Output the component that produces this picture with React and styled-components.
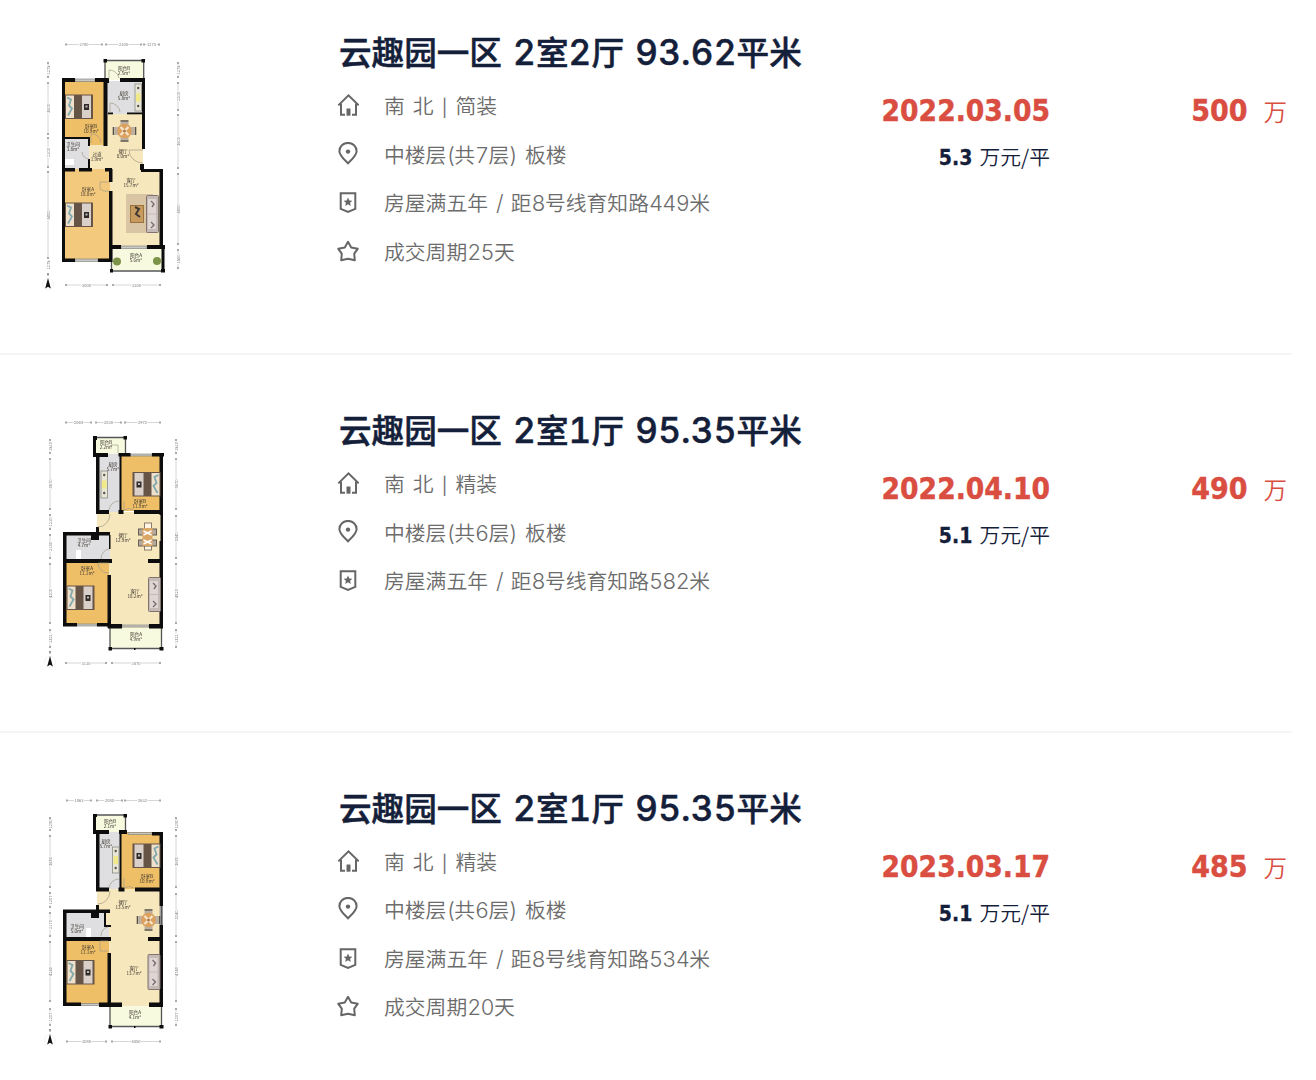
import React from 'react';
import styled, {createGlobalStyle} from "styled-components";

const GlobalStyle = createGlobalStyle`
    body {
        margin: 0;
        background-color: #fff;
    }
`;

const PageWrap = styled.div`
    width: 1292px;
    height: 1080px;
    overflow: hidden;
`;

// the list is scrolled a little, the first row starts above the page
const List = styled.div`
    margin-top: -23px;
`;

const Row = styled.div`
    height: 377.75px;
    box-sizing: border-box;
    padding: 53px 5px 0 30px;
    display: flex;
    align-items: flex-start;
    border-bottom: 2px solid #f5f5f5;
`;

const PlanImg = styled.svg`
    display: block;
    flex: none;
    width: 170px;
    height: 270px;
    margin-right: 137px;
    filter: blur(0.5px);
`;

const Info = styled.div`
    width: 500px;
    flex: none;
`;

const Title = styled.div`
    height: 48px;
    line-height: 42px;
    margin-left: 2px;
    margin-bottom: 3px;
    font-family: "Noto Sans CJK SC", sans-serif;
    font-size: 32.6px;
    font-weight: 500;
    -webkit-text-stroke: 0.5px #14203a;
    color: #14203a;
    word-spacing: 3.8px;
    white-space: pre;
`;

const TitleNum = styled.span`
    font-family: "Inter", sans-serif;
    font-weight: 500;
    font-size: 35px;
    line-height: 1;
    letter-spacing: 0.25px;
    font-variant-numeric: tabular-nums;
`;

const InfoLine = styled.div`
    height: 48.5px;
    display: flex;
    align-items: center;
`;

const IconBox = styled.svg`
    display: block;
    width: 22px;
    height: 24px;
    margin-right: 25px;
    flex: none;
    fill: none;
    stroke: #666;
    stroke-width: 2;
`;

const InfoText = styled.span`
    font-family: "Noto Sans CJK SC", sans-serif;
    font-size: 20.8px;
    font-weight: 350;
    line-height: 30px;
    color: #6c6c6c;
    white-space: pre;
`;

const Latin = styled.span`
    font-family: "Inter", sans-serif;
    font-size: ${props=>props.$bar ? 17 : 21.8}px;
    font-weight: ${props=>props.$bar ? 400 : 300};
    line-height: 1;
    letter-spacing: ${props=>props.$bar ? 0 : -0.7}px;
    font-variant-numeric: tabular-nums;
    word-spacing: ${props=>props.$bar ? 3.6 : 2.8}px;
`;

const DateBox = styled.div`
    width: 213px;
    margin-top: 58px;
    flex: none;
    text-align: right;
`;

const DealDate = styled.div`
    height: 44px;
    line-height: 46px;
    font-family: "DejaVu Sans Condensed", "DejaVu Sans", sans-serif;
    font-stretch: condensed;
    font-size: 29.6px;
    font-weight: 700;
    color: #d94e41;
    -webkit-text-stroke: 0.4px #d94e41;
`;

const UnitPrice = styled.div`
    height: 48px;
    line-height: 48px;
    font-family: "Noto Sans CJK SC", sans-serif;
    font-size: 20.8px;
    font-weight: 350;
    color: #14203a;
    white-space: pre;
`;

const UnitNum = styled.span`
    margin-right: 2.5px;
    font-family: "DejaVu Sans Condensed", "DejaVu Sans", sans-serif;
    font-stretch: condensed;
    font-size: 21px;
    font-weight: 700;
    -webkit-text-stroke: 0.3px #14203a;
`;

const PriceBox = styled.div`
    flex: 1;
    margin-top: 58px;
    display: flex;
    justify-content: flex-end;
    align-items: baseline;
    line-height: 46px;
    color: #d94e41;
`;

const PriceNum = styled.span`
    font-family: "DejaVu Sans Condensed", "DejaVu Sans", sans-serif;
    font-stretch: condensed;
    font-size: 30px;
    font-weight: 700;
    -webkit-text-stroke: 0.4px #d94e41;
`;

const PriceUnit = styled.span`
    margin-left: 16px;
    font-family: "Noto Sans CJK SC", sans-serif;
    font-size: 23.5px;
    font-weight: 350;
`;

const HomeIcon = () => (
    <IconBox viewBox="0 0 22 24">
        <path d="M1.3 12.4 L11.5 2.4 L21.7 12.4" />
        <path d="M4 10.5 V21.7 H8 M15 21.7 H19 V10.5" />
        <path d="M11.5 15.5 V22.7" strokeWidth="4" />
    </IconBox>
);

const PinIcon = () => (
    <IconBox viewBox="0 0 22 24">
        <path d="M11 21.3 C7 17.2 2.4 13.5 2.4 9.2 A8.6 8.3 0 0 1 19.6 9.2 C19.6 13.5 15 17.2 11 21.3 Z" />
        <circle cx="11" cy="9.6" r="2.2" fill="#666" stroke="none" />
    </IconBox>
);

const BadgeIcon = () => (
    <IconBox viewBox="0 0 22 24">
        <path d="M3.7 3.3 H18.3 V18.8 L11 22 L3.7 18.8 Z" />
        <path fill="#666" stroke="none" d="M11 7.5 L12.3 10.4 L15.4 10.7 L13.1 12.8 L13.7 15.9 L11 14.3 L8.3 15.9 L8.9 12.8 L6.6 10.7 L9.7 10.4 Z" />
    </IconBox>
);

const StarIcon = () => (
    <IconBox viewBox="0 0 22 24">
        <path strokeLinejoin="round" d="M11 2.8 L14.2 8.4 L20.7 9.8 L17.2 14.7 L17.8 21.3 L11 19.7 L4.2 21.3 L4.8 14.7 L1.3 9.8 L7.8 8.4 Z" />
    </IconBox>
);

const icons = [HomeIcon, PinIcon, BadgeIcon, StarIcon];

const floorColors = {
    wood: '#efbf68',
    light: '#f3c97e',
    tile: '#dfdfe1',
    hall: '#f7e7bd',
    balcony: '#f8fae0',
};

const Bed = ({x, y, flip}) => (
    <g transform={flip ? `translate(${x + 28} ${y}) scale(-1 1)` : `translate(${x} ${y})`}>
        <rect width="28" height="24.5" fill="#665447" />
        <rect x="1" y="1" width="8" height="22.5" fill="#eee0ca" />
        <path d="M2 3 L6 5 L4 11 L7 14 L3 21" stroke="#82a9ad" strokeWidth="1.8" fill="none" />
        <rect x="17" y="1" width="9" height="22.5" fill="#d9d0c9" />
        <rect x="19" y="9.5" width="5" height="6" fill="#302b28" />
        <rect x="20.5" y="11" width="2" height="2" fill="#bbb" />
    </g>
);

const Dining = ({x, y, tall}) => (
    <g transform={`translate(${x} ${y})`}>
        {tall ? (
            <>
                <rect x="-3" y="-14" width="7" height="27" fill="#fff5e0" stroke="#8a7a6c" strokeWidth="1" />
                <rect x="-9" y="-8" width="18" height="6" fill="#b5a99e" stroke="#665d55" strokeWidth="1" />
                <rect x="-9" y="3" width="18" height="6" fill="#b5a99e" stroke="#665d55" strokeWidth="1" />
                <rect x="-5" y="-9" width="10" height="18" fill="#dba768" />
                <path d="M-4 -6 L4 -2 M4 -6 L-4 -2 M-4 3 L4 7 M4 3 L-4 7" stroke="#fff" strokeWidth="1.4" />
            </>
        ) : (
            <>
                <path d="M-4 -10 H4 M-4 10 H4 M-11 -4 V4 M11 -4 V4" stroke="#56504b" strokeWidth="1.6" />
                <rect x="-4" y="-9" width="8" height="18" fill="#bbb0a3" />
                <rect x="-10" y="-4" width="20" height="8" fill="#bbb0a3" />
                <circle r="7.3" fill="#dda15e" />
                <path d="M-4 -4 L4 4 M4 -4 L-4 4" stroke="#f7e7cf" strokeWidth="2.2" />
                <circle r="1.5" fill="#a77a4d" />
            </>
        )}
    </g>
);

const Sofa = ({x, y, h}) => (
    <g transform={`translate(${x} ${y})`}>
        <rect x="0.5" y="0.5" width="12" height={h} rx="1" fill="#c6bab7" stroke="#81736f" strokeWidth="1" />
        <rect x="2" y="4" width="8" height={h / 2 - 4} fill="#dfd6d3" />
        <rect x="2" y={h / 2 + 1} width="8" height={h / 2 - 4} fill="#dfd6d3" />
        <path d={`M5 6 L8 9 L6 12 M5 ${h - 10} L8 ${h - 7} L5 ${h - 4}`} stroke="#7b6e70" strokeWidth="1.4" fill="none" />
    </g>
);

const Stove = ({x, y, h}) => (
    <g>
        <rect x={x} y={y} width="6.5" height={h} fill="#e9e6d6" stroke="#8a8a86" strokeWidth="0.8" />
        <rect x={x + 1} y={y + h * 0.35} width="4.5" height={h * 0.3} fill="#f1e987" />
        <circle cx={x + 3.2} cy={y + 4} r="1.2" fill="#555" />
        <circle cx={x + 3.2} cy={y + h - 5} r="1.2" fill="#555" />
    </g>
);

const Compass = ({x, y}) => (
    <g>
        <circle cx={x} cy={y} r="5.5" fill="none" stroke="#eee" strokeWidth="0.7" />
        <path d={`M${x} ${y - 6} L${x + 2.8} ${y + 4.5} L${x} ${y + 2.8} L${x - 2.8} ${y + 4.5} Z`} fill="#111" />
        <rect x={x - 1} y={y - 11} width="2" height="2.5" fill="#999" />
    </g>
);

// [start, end, label]
const DimsX = ({y, items}) => items.map(([a, b, label]) => (
    <g key={a}>
        <path d={`M${a} ${y} H${b}`} stroke="#ccc" strokeWidth="0.8" />
        <path d={`M${a} ${y - 1} h2 v2 h-2 Z M${b - 2} ${y - 1} h2 v2 h-2 Z`} fill="#aaa" />
        <rect x={(a + b) / 2 - 5} y={y - 2} width="10" height="4" fill="#fff" />
        <text x={(a + b) / 2} y={y + 1.5} fontSize="4" textAnchor="middle" fill="#777">{label}</text>
    </g>
));

const DimsY = ({x, items}) => items.map(([a, b, label]) => (
    <g key={a} transform={`translate(${x} ${(a + b) / 2}) rotate(-90)`}>
        <path d={`M${(a - b) / 2} 0 H${(b - a) / 2}`} stroke="#ccc" strokeWidth="0.8" />
        <path d={`M${(a - b) / 2} -1 h2 v2 h-2 Z M${(b - a) / 2 - 2} -1 h2 v2 h-2 Z`} fill="#aaa" />
        <rect x="-5" y="-2" width="10" height="4" fill="#fff" />
        <text y="1.5" fontSize="4" textAnchor="middle" fill="#777">{label}</text>
    </g>
));

const plans = {
    a: {
        floors: [
            ['balcony', 75, 30, 39, 20], ['tile', 77, 51, 36, 33], ['hall', 76, 84, 37, 57],
            ['hall', 58, 108, 20, 31], ['hall', 79, 139, 52, 78], ['wood', 34, 50, 41, 58],
            ['wood', 58, 106, 17, 9], ['tile', 34, 108, 25, 31], ['light', 34, 139, 46, 92], ['balcony', 82, 218, 50, 22],
        ],
        walls: [
            [32, 48, 13, 4], [65, 48, 12, 4], [32, 48, 3, 93], [34, 107, 26, 2], [73.5, 48, 4, 68],
            [58, 108, 2, 8], [58, 129, 2, 10], [76, 48, 3, 5], [90, 48, 25, 4], [112, 48, 3, 71],
            [110, 134, 4, 6], [78, 82.5, 5, 1.8], [97, 82.5, 16, 1.8], [111, 139, 22, 3], [129.5, 139, 3.5, 79],
            [32, 138, 13, 3.5], [49, 138, 13, 3.5], [75, 138, 7, 3.5], [32, 139, 3, 92], [32, 228.5, 13, 3.5],
            [68, 228.5, 14, 3.5], [79, 161, 3.5, 71], [79, 139, 3.5, 13], [81, 215, 10, 4], [117, 215, 18, 4],
            [131.5, 218, 3, 24], [80, 239, 3, 3.5], [131, 239, 4, 3.5], [73.5, 29, 3.5, 3.5], [111.5, 29, 3.5, 3.5],
        ],
        lines: 'M75 30.5 H114 M75 31 V50 M113.7 31 V50 M81.5 219 V241 M81 241 H133',
        windows: [[45, 49, 20, 2.5], [45, 229, 23, 2.5], [91, 216, 26, 2.5]],
        doors: 'M79 40 V49 M79 40 A10 10 0 0 1 89 48 M80 83 V73 A10 10 0 0 1 90 82 M52 122 A7 8 0 0 0 59 129 M61 113 V104 A9 9 0 0 1 71 113 M113 120 H99 A14 13 0 0 0 113 133 M79 152 H70 V159 A10 10 0 0 0 79 161',
        labels: [
            [94, 40, '阳台B', '2.5m²'], [94, 65, '厨房', '5.8m²'], [61, 98, '卧室B', '10.9m²'], [43, 116, '卫生间', '3.8m²'],
            [67, 126, '过道', '1.9m²'], [93, 123, '餐厅', '8.0m²'], [101, 152, '客厅', '15.7m²'],
            [58, 161, '卧室A', '18.0m²'], [106, 227, '阳台A', '5.6m²'],
        ],
        extra: (
            <g>
                <Bed x={35} y={64.5} />
                <Bed x={35} y={172.5} />
                <Stove x={105} y={54} h={27} />
                <Dining x={94.5} y={101} />
                <rect x="96" y="164" width="27" height="39" fill="#d9c5a3" />
                <rect x="100.5" y="175.5" width="13" height="17" fill="#c79a5d" stroke="#9a723f" />
                <path d="M105 177 L109 179 L106 184 L110 187" stroke="#403936" strokeWidth="2" fill="none" />
                <Sofa x={116} y={165} h={37} />
                <path d="M35 129 h9 v6 h-9 Z" fill="#fff" />
                <circle cx="87" cy="231.5" r="4" fill="#7d9347" />
                <circle cx="127" cy="231" r="4" fill="#7d9347" />
            </g>
        ),
        top: [[35, 73, '2700'], [75, 112, '2300'], [113, 130, '1275']],
        left: [[32, 48, '1275'], [52, 105, '3600'], [107, 138, '2100'], [141, 229, '5800'], [231, 239, '1275']],
        right: [[32, 48, '1275'], [52, 81, '2200'], [84, 139, '3600'], [143, 215, '4800'], [219, 239, '1500']],
        bottom: [[35, 78, '3000'], [82, 131, '3300']],
        dims: [14.5, 18, 148, 255],
        compass: [18, 254],
    },
    b: {
        floors: [
            ['balcony', 64, 29, 32, 17], ['tile', 69, 46, 22, 58], ['wood', 91, 46, 39, 57], ['hall', 67, 104, 64, 48],
            ['tile', 35, 126, 46, 27], ['hall', 78, 124, 53, 96], ['tile', 76, 126, 4, 26], ['wood', 35, 153, 44, 64], ['balcony', 80, 220, 52, 21],
        ],
        walls: [
            [63, 28, 3, 20], [63, 45, 15, 4], [63, 28, 4, 4], [93.5, 28, 3.5, 3.5], [66, 47, 3.5, 58], [66, 102, 13, 4],
            [89.5, 45, 2, 60], [88.5, 45, 12, 3.5], [122, 45, 12, 3.5], [129.5, 45, 3.5, 62], [129.5, 133, 3.5, 87],
            [130.5, 106, 2.5, 30], [88.5, 102, 5, 4], [104, 102, 29, 4], [66, 119, 3, 6], [33, 124, 47, 3.5], [61, 125, 8, 7],
            [33, 124, 3.5, 94], [79, 127, 1.5, 14], [33, 151, 49, 4], [118, 151, 14, 4], [77.5, 167, 3.5, 53],
            [33, 215, 14, 3.5], [67, 215, 12, 3.5], [78, 216, 14, 4.5], [119, 216, 14, 4.5],
            [78.5, 239, 3.5, 3.5], [129.5, 239, 4, 3.5], [104, 240, 1.5, 2],
        ],
        lines: 'M64 29.5 H96 M95.5 30 V46 M80 220 V240 M131.5 220 V240 M80 240.5 H132',
        windows: [[100, 46, 22, 2], [47, 216, 20, 2], [92, 217, 27, 2]],
        doors: 'M81 41 V37 H88 V45 M79 102 A10 10 0 0 1 89 93 M94 93 V102 A10 10 0 0 1 104 102 M80 106 A12 13 0 0 1 68 119 M71 151 A9 10 0 0 1 79 141 M79 155 H68 A10 10 0 0 0 79 165',
        labels: [
            [76, 36, '阳台B', '2.2m²'], [83, 58, '厨房', '5.7m²'], [110, 95, '卧室B', '11.9m²'], [93, 129, '餐厅', '12.9m²'],
            [54, 134, '卫生间', '4.7m²'], [57, 162, '卧室A', '11.1m²'], [105, 185, '客厅', '18.2m²'], [106, 228, '阳台A', '4.9m²'],
        ],
        extra: (
            <g>
                <Bed x={102.5} y={64} flip />
                <Bed x={36.5} y={177.5} />
                <Stove x={71} y={63} h={27} />
                <Dining x={117.5} y={129} tall />
                <Sofa x={118} y={169} h={34} />
                <path d="M46 151 v-9 h5 v9 Z" fill="#fff" />
            </g>
        ),
        top: [[35, 62, '2064'], [65, 92, '2030'], [94, 131, '2972']],
        left: [[31, 46, '1510'], [50, 102, '3670'], [106, 122, '1210'], [126, 151, '2130'], [155, 216, '4200'], [221, 240, '1321']],
        right: [[31, 46, '1510'], [50, 102, '3670'], [107, 151, '3340'], [155, 216, '4820'], [221, 240, '1321']],
        bottom: [[35, 77, '3110'], [81, 131, '3470']],
        dims: [14.5, 20, 146, 255],
        compass: [20, 254],
    },
    c: {
        floors: [
            ['balcony', 64, 29, 32, 17], ['tile', 69, 46, 22, 57], ['wood', 91, 46, 39, 57], ['hall', 67, 103, 64, 50],
            ['tile', 35, 126, 41, 27], ['hall', 78, 124, 53, 96], ['tile', 74, 139, 5, 14], ['wood', 35, 153, 44, 65], ['balcony', 80, 220, 52, 20],
        ],
        walls: [
            [63, 28, 3, 18], [63, 44, 16, 4], [63, 28, 4, 3], [93.5, 28, 3.5, 3.5], [66, 46, 3.5, 59], [66, 101.5, 13, 4],
            [89.5, 45, 2, 58], [89, 44, 8, 4], [122, 46, 11, 3.5], [129.5, 46, 3.5, 74], [129.5, 139, 3.5, 81],
            [88.5, 101.5, 6, 4], [105, 101.5, 28, 4], [66, 119, 3, 6], [33, 123.5, 47, 3.5], [61, 125, 8, 7],
            [33, 124, 3.5, 95], [74, 127, 2, 14], [74, 139, 7, 2], [33, 151, 48, 4], [118, 151, 14, 4], [77.5, 167, 3.5, 52],
            [33, 216.5, 18, 3.5], [69, 216.5, 23, 4.5], [119, 216.5, 14, 4.5],
            [78.5, 239, 3.5, 3.5], [129.5, 239, 4, 3.5], [104, 240, 1.5, 2],
        ],
        lines: 'M64 29 H96 M95.5 30 V46 M80 220 V240 M131.5 220 V240 M80 240.5 H132 M131.5 120 V139',
        windows: [[98, 46.5, 24, 2], [51, 217.5, 18, 2], [130, 120, 2.5, 19]],
        doors: 'M79 102 A10 10 0 0 1 89 93 M94 92 V102 A10 10 0 0 1 104 102 M80 105 A12 13 0 0 1 68 118 M71 150 A8 9 0 0 1 78 141 M78 155 H70 V165 H78',
        labels: [
            [80, 37, '阳台B', '2.1m²'], [76, 57, '厨房', '5.7m²'], [117, 92, '卧室B', '10.9m²'], [93, 118, '餐厅', '13.5m²'],
            [47, 142, '卫生间', '5.0m²'], [58, 163, '卧室A', '11.1m²'], [104, 184, '客厅', '13.7m²'], [105, 228, '阳台A', '4.1m²'],
        ],
        extra: (
            <g>
                <Bed x={102.5} y={57.5} flip />
                <Bed x={36.5} y={174} />
                <Stove x={82.5} y={61} h={26} />
                <Dining x={118.5} y={134} />
                <Sofa x={117.5} y={168} h={35} />
                <path d="M56 151 v-9 h5 v9 Z" fill="#fff" />
            </g>
        ),
        top: [[36, 62, '1863'], [66, 93, '2080'], [94, 131, '2632']],
        left: [[31, 45, '1290'], [49, 102, '3680'], [106, 122, '1207'], [126, 151, '2170'], [155, 216, '4240'], [222, 240, '1207']],
        right: [[31, 45, '1290'], [49, 102, '3680'], [107, 151, '3240'], [155, 216, '4740'], [222, 240, '1207']],
        bottom: [[36, 77, '3080'], [81, 131, '4450']],
        dims: [14.5, 20, 146, 255.5],
        compass: [20, 254],
    },
};

const FloorPlan = ({plan}) => (
    <PlanImg viewBox="0 0 170 270" fontFamily='"Noto Sans CJK SC", sans-serif'>
        <DimsX y={plan.dims[0]} items={plan.top} />
        <DimsY x={plan.dims[1]} items={plan.left} />
        <DimsY x={plan.dims[2]} items={plan.right} />
        <DimsX y={plan.dims[3]} items={plan.bottom} />
        {plan.floors.map(([type, x, y, w, h], i) => (
            <rect key={i} x={x} y={y} width={w} height={h} fill={floorColors[type]} />
        ))}
        {plan.windows.map(([x, y, w, h], i) => (
            <rect key={i} x={x} y={y} width={w} height={h} fill="#c9c9c4" stroke="#777" strokeWidth="0.6" />
        ))}
        <path d={plan.lines} fill="none" stroke="#555" strokeWidth="1.3" />
        {plan.walls.map(([x, y, w, h], i) => (
            <rect key={i} x={x} y={y} width={w} height={h} fill="#0d0d0d" />
        ))}
        <path d={plan.doors} fill="none" stroke="#a39b86" strokeWidth="0.7" />
        {plan.extra}
        {plan.labels.map(([x, y, name, size]) => (
            <text key={name} fontSize="4.6" textAnchor="middle" fill="#3a352c">
                <tspan x={x} y={y}>{name}</tspan>
                <tspan x={x} y={y + 4.6}>{size}</tspan>
            </text>
        ))}
        <Compass x={plan.compass[0]} y={plan.compass[1]} />
    </PlanImg>
);

const deals = [
    {
        plan: 'a', rooms: ['2', '2'], area: '93.62', date: '2022.03.05', unit: '5.3', price: '500',
        lines: ['南 北 | 简装', '中楼层(共7层) 板楼', '房屋满五年 / 距8号线育知路449米', '成交周期25天'],
    },
    {
        plan: 'b', rooms: ['2', '1'], area: '95.35', date: '2022.04.10', unit: '5.1', price: '490',
        lines: ['南 北 | 精装', '中楼层(共6层) 板楼', '房屋满五年 / 距8号线育知路582米'],
    },
    {
        plan: 'c', rooms: ['2', '1'], area: '95.35', date: '2023.03.17', unit: '5.1', price: '485',
        lines: ['南 北 | 精装', '中楼层(共6层) 板楼', '房屋满五年 / 距8号线育知路534米', '成交周期20天'],
    },
];

// every odd part is a run of latin characters
const splitLatin = (line) => line.split(/([ -~]+)/).map((part, i) => (
    i % 2 ? <Latin key={i} $bar={part.includes('|')}>{part}</Latin> : part
));

const DealRow = ({deal}) => (
    <Row>
        <FloorPlan plan={plans[deal.plan]} />
        <Info>
            <Title>
                云趣园一区 <TitleNum>{deal.rooms[0]}</TitleNum>室<TitleNum>{deal.rooms[1]}</TitleNum>厅 <TitleNum>{deal.area}</TitleNum>平米
            </Title>
            {deal.lines.map((line, i) => {
                const Icon = icons[i];
                return (
                    <InfoLine key={line}>
                        <Icon />
                        <InfoText>{splitLatin(line)}</InfoText>
                    </InfoLine>
                );
            })}
        </Info>
        <DateBox>
            <DealDate>{deal.date}</DealDate>
            <UnitPrice><UnitNum>{deal.unit}</UnitNum> 万元/平</UnitPrice>
        </DateBox>
        <PriceBox>
            <PriceNum>{deal.price}</PriceNum>
            <PriceUnit>万</PriceUnit>
        </PriceBox>
    </Row>
);

const App = () => {
    return(
        <>
            <GlobalStyle />
            <PageWrap>
                <List>
                    {deals.map((deal) => <DealRow key={deal.date} deal={deal} />)}
                </List>
            </PageWrap>
        </>
    );
};

export default App;
